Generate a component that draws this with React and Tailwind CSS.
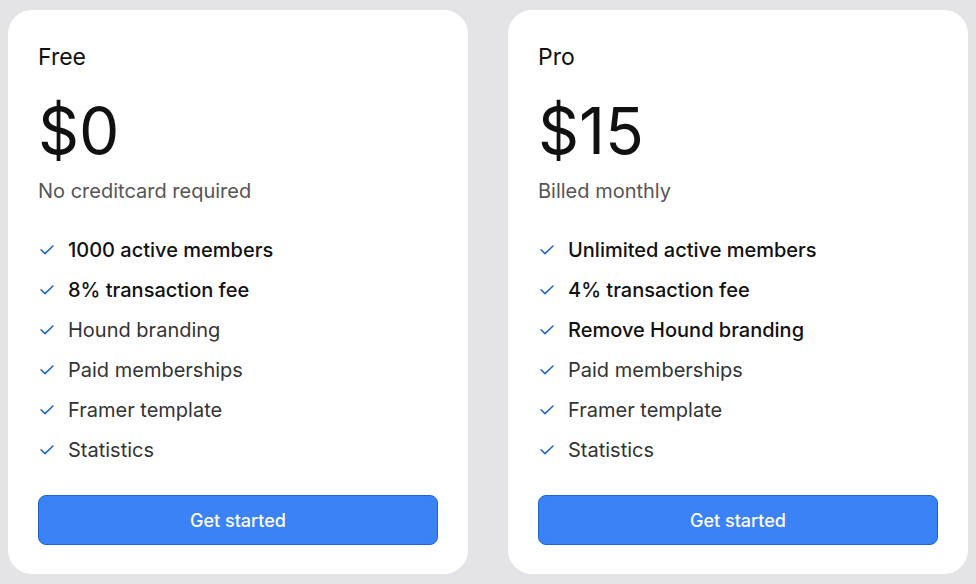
import React from 'react';

const plans = [
    {
        name: 'Free',
        price: '$0',
        note: 'No creditcard required',
        features: [
            { text: '1000 active members', strong: true },
            { text: '8% transaction fee', strong: true },
            { text: 'Hound branding' },
            { text: 'Paid memberships' },
            { text: 'Framer template' },
            { text: 'Statistics' },
        ],
    },
    {
        name: 'Pro',
        price: '$15',
        note: 'Billed monthly',
        features: [
            { text: 'Unlimited active members', strong: true },
            { text: '4% transaction fee', strong: true },
            { text: 'Remove Hound branding', strong: true },
            { text: 'Paid memberships' },
            { text: 'Framer template' },
            { text: 'Statistics' },
        ],
    },
];

// маленькая галочка
const Check = () => (
    <svg width="14" height="10" viewBox="0 0 14 10" fill="none" className="shrink-0">
        <path d="M1 4.8 L5 8.6 L13 1" stroke="#1d64c9" strokeWidth="1.5" strokeLinecap="round" strokeLinejoin="round" />
    </svg>
);

function PlanCard({ plan }) {
    return (
        <div className="w-[460px] h-[564px] bg-white rounded-3xl px-[30px] pt-[31px] pb-[29px] flex flex-col">
            <div className="text-[23px] leading-[32px] text-[#111]">{plan.name}</div>
            <div className="mt-[26px] text-[64px] leading-[64px] text-[#111]">{plan.price}</div>
            <div className="mt-[14px] text-[20px] leading-[28px] text-[#555]">{plan.note}</div>
            <ul className="mt-[31px] flex flex-col gap-[12px]">
                {plan.features.map((f) => (
                    <li key={f.text} className="flex items-center gap-[14px] pl-[2px] h-[28px]">
                        <Check />
                        <span className={f.strong ? 'text-[20px] font-medium text-[#111]' : 'text-[20px] text-[#333]'}>
                            {f.text}
                        </span>
                    </li>
                ))}
            </ul>
            <button className="mt-[31px] h-[50px] w-full rounded-lg bg-[#3b82f6] border border-[#1f63d8] text-white text-[18px] font-medium">
                Get started
            </button>
        </div>
    );
}

export default function App() {
    return (
        <div className="w-[976px] h-[584px] bg-[#e4e4e6] pt-[10px] pl-[8px] flex gap-[40px]" style={{ fontFamily: 'Inter, "Noto Sans", sans-serif' }}>
            {plans.map((p) => (
                <PlanCard key={p.name} plan={p} />
            ))}
        </div>
    );
}
